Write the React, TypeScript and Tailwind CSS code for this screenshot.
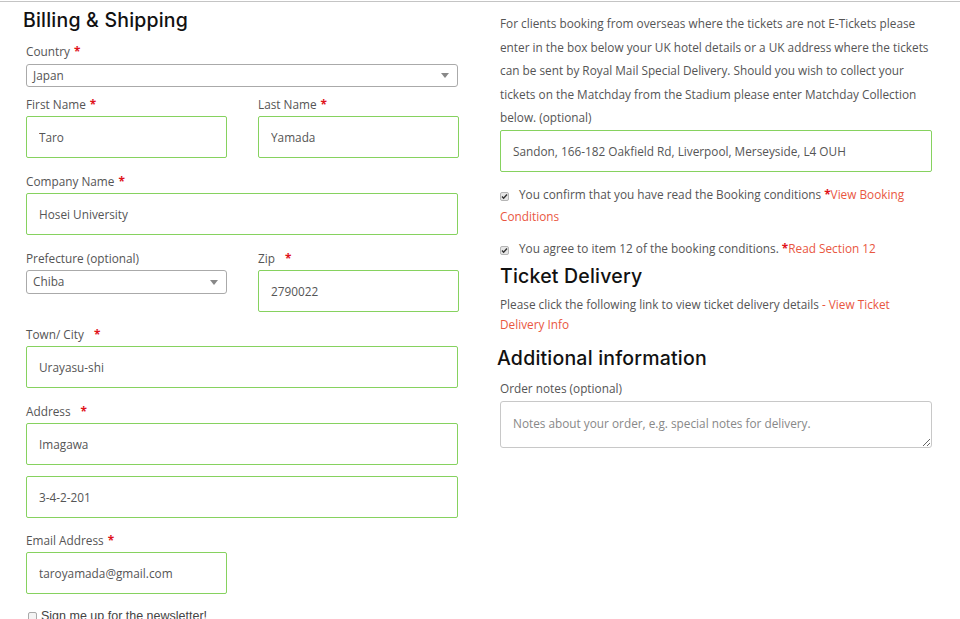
import { ReactNode } from "react";

const FONT = "font-['Open_Sans',sans-serif]";
const HEAD = "font-['Inter',sans-serif] font-medium tracking-[0.2px] text-[#111]";

function Star({ wide }: { wide?: boolean }) {
  return (
    <span className={`text-[#e0121b] font-bold ${wide ? "ml-[10px]" : "ml-[4px]"}`}>*</span>
  );
}

function Label({ children }: { children: ReactNode }) {
  return <div className="text-[11.8px] leading-[20px] text-[#555]">{children}</div>;
}

function TextBox({ value, className = "" }: { value: string; className?: string }) {
  return (
    <input
      readOnly
      value={value}
      className={`block h-[42px] border border-[#86d25f] rounded-[2px] pl-[12px] text-[11.8px] text-[#555] outline-none bg-white ${className}`}
    />
  );
}

function Select({ value, className = "" }: { value: string; className?: string }) {
  return (
    <div
      className={`flex items-center justify-between border border-[#aaa] rounded-[3px] pl-[6px] pr-[8px] text-[11.8px] text-[#555] bg-white ${className}`}
    >
      <span>{value}</span>
      <svg width="8" height="5" viewBox="0 0 8 5">
        <path d="M0 0h8L4 5z" fill="#888" />
      </svg>
    </div>
  );
}

function Check({ checked }: { checked?: boolean }) {
  return (
    <span className="inline-flex items-center justify-center w-[9px] h-[9px] rounded-[2px] border border-[#b5b5b5] bg-[#e6e6e6] align-[-1px]">
      {checked && (
        <svg width="7" height="7" viewBox="0 0 7 7">
          <path d="M1 3.6l1.6 1.6L6 1.6" stroke="#333" strokeWidth="1.4" fill="none" />
        </svg>
      )}
    </span>
  );
}

function Field({ label, children, className = "" }: { label: ReactNode; children: ReactNode; className?: string }) {
  return (
    <div className={className}>
      <Label>{label}</Label>
      <div className="mt-[2px]">{children}</div>
    </div>
  );
}

export default function App() {
  return (
    <div className={`${FONT} bg-white w-[960px] h-[619px] overflow-hidden`}>
      <div className="mt-[1px] border-t border-[#c4c4c4]" />
      <div className="flex">
        {/* billing */}
        <div className="w-[500px] pl-[26px]">
          <div className={`${HEAD} -ml-[3px] mt-[5px] text-[19.5px] leading-[26px]`}>Billing &amp; Shipping</div>
          <div className="mt-[8px]">
            <Label>
              Country<Star />
            </Label>
            <Select value="Japan" className="mt-[3px] h-[23px] w-[432px]" />
          </div>
          <div className="flex gap-[31px] mt-[7px]">
            <Field label={<>First Name<Star /></>}>
              <TextBox value="Taro" className="w-[201px]" />
            </Field>
            <Field label={<>Last Name<Star /></>}>
              <TextBox value="Yamada" className="w-[201px]" />
            </Field>
          </div>
          <Field label={<>Company Name<Star /></>} className="mt-[13px]">
            <TextBox value="Hosei University" className="w-[432px]" />
          </Field>
          <div className="flex gap-[31px] mt-[13px]">
            <Field label="Prefecture (optional)">
              <Select value="Chiba" className="h-[24px] w-[201px]" />
            </Field>
            <Field label={<>Zip<Star wide /></>}>
              <TextBox value="2790022" className="w-[201px]" />
            </Field>
          </div>
          <Field label={<>Town/ City<Star wide /></>} className="mt-[12px]">
            <TextBox value="Urayasu-shi" className="w-[432px]" />
          </Field>
          <Field label={<>Address<Star wide /></>} className="mt-[13px]">
            <TextBox value="Imagawa" className="w-[432px]" />
          </Field>
          <TextBox value="3-4-2-201" className="w-[432px] mt-[11px]" />
          <Field label={<>Email Address<Star /></>} className="mt-[12px]">
            <TextBox value="taroyamada@gmail.com" className="w-[201px]" />
          </Field>
          <div className="mt-[14px] ml-[2px] flex items-center gap-[4px] font-['Liberation_Sans',sans-serif] text-[12.5px] leading-[16px] text-[#444]">
            <span className="inline-block w-[9px] h-[9px] border border-[#aaa] rounded-[2px] bg-[#f4f4f4]" />
            Sign me up for the newsletter!
          </div>
        </div>

        {/* right column */}
        <div className="w-[432px] text-[11.8px] text-[#555]">
          <p className="mt-[10px] leading-[23.5px]">
            For clients booking from overseas where the tickets are not E-Tickets please enter in the box below
            your UK hotel details or a UK address where the tickets can be sent by Royal Mail Special Delivery.
            Should you wish to collect your tickets on the Matchday from the Stadium please enter Matchday
            Collection below. (optional)
          </p>
          <TextBox value="Sandon, 166-182 Oakfield Rd, Liverpool, Merseyside, L4 OUH" className="w-[432px]" />
          <p className="mt-[11px] leading-[22px]">
            <Check checked />
            <span className="ml-[10px]">You confirm that you have read the Booking conditions </span>
            <span className="text-[#e0121b] font-bold">*</span>
            <span className="text-[#e9573f]">View Booking Conditions</span>
          </p>
          <p className="mt-[10px] leading-[22px]">
            <Check checked />
            <span className="ml-[10px]">You agree to item 12 of the booking conditions. </span>
            <span className="text-[#e0121b] font-bold">*</span>
            <span className="text-[#e9573f]">Read Section 12</span>
          </p>
          <div className={`${HEAD} mt-[4px] text-[19.5px] leading-[26px]`}>Ticket Delivery</div>
          <p className="mt-[5px] leading-[20px] pr-[30px]">
            Please click the following link to view ticket delivery details{" "}
            <span className="text-[#e9573f]">- View Ticket Delivery Info</span>
          </p>
          <div className={`${HEAD} -ml-[3px] mt-[11px] text-[19.5px] leading-[26px]`}>Additional information</div>
          <div className="mt-[7px]">
            <Label>Order notes (optional)</Label>
          </div>
          <textarea
            readOnly
            placeholder="Notes about your order, e.g. special notes for delivery."
            className="block mt-[3px] w-[432px] h-[47px] border border-[#c8c8c8] rounded-[3px] pl-[12px] pt-[11px] text-[11.8px] leading-[20px] text-[#555] placeholder:text-[#888] outline-none"
          />
        </div>
      </div>
    </div>
  );
}
